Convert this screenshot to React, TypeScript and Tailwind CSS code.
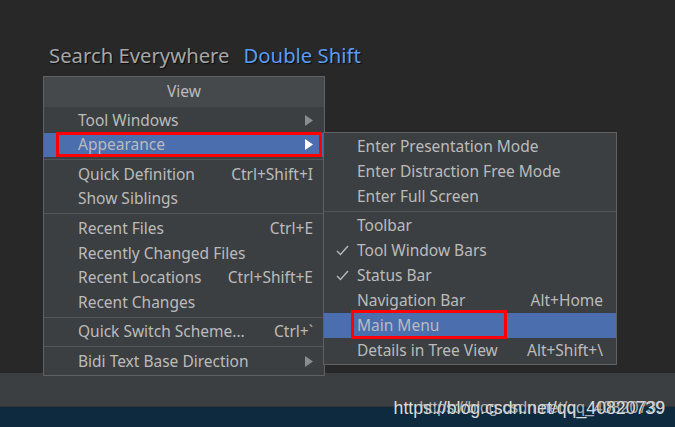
import React from 'react';

type Item =
  | { sep: true }
  | { label: string; shortcut?: string; arrow?: boolean; check?: boolean; selected?: boolean; sep?: false };

const viewItems: Item[] = [
  { label: 'Tool Windows', arrow: true },
  { label: 'Appearance', arrow: true, selected: true },
  { sep: true },
  { label: 'Quick Definition', shortcut: 'Ctrl+Shift+I' },
  { label: 'Show Siblings' },
  { sep: true },
  { label: 'Recent Files', shortcut: 'Ctrl+E' },
  { label: 'Recently Changed Files' },
  { label: 'Recent Locations', shortcut: 'Ctrl+Shift+E' },
  { label: 'Recent Changes' },
  { sep: true },
  { label: 'Quick Switch Scheme...', shortcut: 'Ctrl+`' },
  { sep: true },
  { label: 'Bidi Text Base Direction', arrow: true },
];

const appearanceItems: Item[] = [
  { label: 'Enter Presentation Mode' },
  { label: 'Enter Distraction Free Mode' },
  { label: 'Enter Full Screen' },
  { sep: true },
  { label: 'Toolbar' },
  { label: 'Tool Window Bars', check: true },
  { label: 'Status Bar', check: true },
  { label: 'Navigation Bar', shortcut: 'Alt+Home' },
  { label: 'Main Menu', selected: true },
  { label: 'Details in Tree View', shortcut: 'Alt+Shift+\\' },
];

const font = { fontFamily: '"Noto Sans", "Open Sans", sans-serif' };

function Arrow({ selected }: { selected?: boolean }) {
  return (
    <svg width="8" height="11" viewBox="0 0 8 11" className="shrink-0">
      <polygon points="0,0 8,5.5 0,11" fill={selected ? '#ffffff' : '#8a8c8e'} />
    </svg>
  );
}

function Check() {
  return (
    <svg width="13" height="11" viewBox="0 0 13 11">
      <polyline points="1,6 4.5,9.5 12,1" fill="none" stroke="#b5b5b5" strokeWidth="1.5" />
    </svg>
  );
}

function ViewMenu() {
  return (
    <div className="w-[282px] border border-[#5f6163] bg-[#3c3f41] pb-[1.5px]">
      <div className="h-[30px] bg-[#46494b] flex items-center justify-center text-[15.5px] text-[#bbbbbb]">View</div>
      <div className="pt-[1px]">
        {viewItems.map((it, i) =>
          it.sep ? (
            <div key={i} className="h-[5px] flex items-center">
              <div className="h-px w-full bg-[#535556]" />
            </div>
          ) : (
            <div
              key={i}
              className={`h-[24.6px] flex items-center justify-between pl-[34px] pr-[11px] text-[15.5px] text-[#bbbbbb] ${it.selected ? 'bg-[#4b6eaf]' : ''}`}
            >
              <span>{it.label}</span>
              {it.shortcut && <span>{it.shortcut}</span>}
              {it.arrow && <Arrow selected={it.selected} />}
            </div>
          )
        )}
      </div>
    </div>
  );
}

function AppearanceMenu() {
  return (
    <div className="w-[294px] border border-[#5f6163] bg-[#3c3f41] py-[1px] -ml-[2px] mt-[56px] relative z-10">
      {appearanceItems.map((it, i) =>
        it.sep ? (
          <div key={i} className="h-[4px] flex items-center">
            <div className="h-px w-full bg-[#535556]" />
          </div>
        ) : (
          <div
            key={i}
            className={`h-[25px] flex items-center pl-[12px] pr-[13px] text-[15.5px] text-[#bbbbbb] ${it.selected ? 'bg-[#4b6eaf]' : ''}`}
          >
            <span className="w-[21px] flex items-center">{it.check && <Check />}</span>
            <span className="flex-1">{it.label}</span>
            {it.shortcut && <span>{it.shortcut}</span>}
          </div>
        )
      )}
    </div>
  );
}

export default function App() {
  return (
    <div className="w-[675px] h-[427px] bg-[#282828] relative overflow-hidden flex flex-col" style={font}>
      <div className="h-[373px] relative z-10">
        <div className="pt-[41px] pl-[49px] h-[76px] text-[20.3px] leading-[28px] [text-shadow:1px_1px_1px_#0a0a0a]">
          <span className="text-[#a6a6a6]">Search Everywhere</span>
          <span className="text-[#589df6] ml-[14px]">Double Shift</span>
        </div>
        <div className="flex items-start pl-[43px]">
          <ViewMenu />
          <AppearanceMenu />
        </div>
      </div>

      <div className="h-[34px] bg-[#3c3f41] border-b border-[#313335]" />
      <div className="flex-1 bg-[#0d2a3f]" />

      {/* annotation boxes */}
      <div className="absolute left-[56px] top-[132px] w-[266px] h-[25px] border-[3px] border-[#ff0000] z-20" />
      <div className="absolute left-[351px] top-[310px] w-[156px] h-[29px] border-[3px] border-[#ff0000] z-20" />

      {/* watermark */}
      <div
        className="absolute right-[10px] top-[398px] text-[17.7px] leading-[20px] text-[#dcdcdc] z-30"
        style={{ fontFamily: '"Liberation Sans", Arial, sans-serif' }}
      >
        https://blog.csdn.net/qq_40820739
      </div>
      <div
        className="absolute right-[10px] top-[398px] text-[16px] leading-[20px] text-[#cfcfcf] opacity-80 z-30"
        style={{ fontFamily: '"Liberation Sans", Arial, sans-serif' }}
      >
        https://blog.csdn.net/qq_40820739
      </div>
    </div>
  );
}
